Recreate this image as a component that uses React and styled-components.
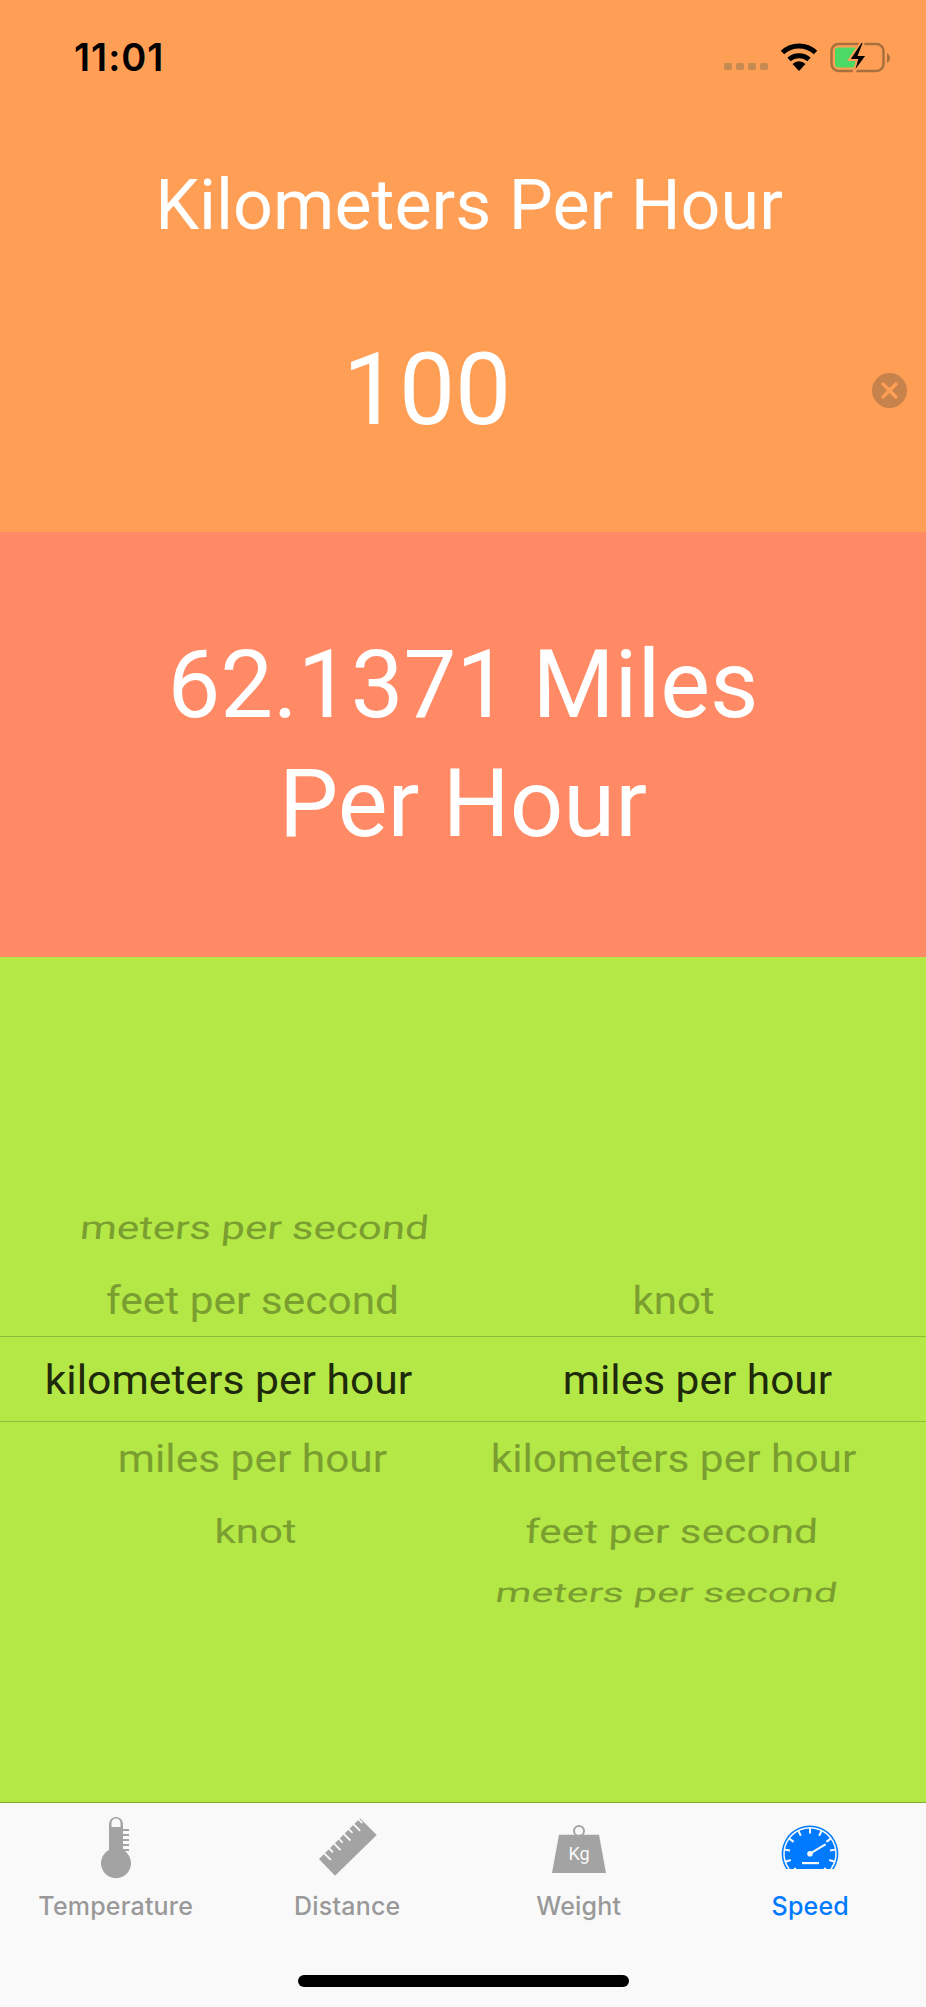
import React from 'react';
import styled, { createGlobalStyle } from 'styled-components';

const GlobalStyle = createGlobalStyle`
  html, body {
    margin: 0;
    padding: 0;
  }
  body {
    font-family: Roboto, "Noto Sans", sans-serif;
  }
`;

const Screen = styled.div`
  width: 926px;
  height: 2007px;
  display: flex;
  flex-direction: column;
  overflow: hidden;
`;

const InputPanel = styled.section`
  height: 532px;
  background-color: #ff9f55;
  display: flex;
  flex-direction: column;
`;

const StatusBar = styled.div`
  height: 112px;
  box-sizing: border-box;
  padding: 38px 36px 0 74px;
  display: flex;
  justify-content: space-between;
  align-items: flex-start;
`;

const Clock = styled.span`
  font-family: Inter, sans-serif;
  font-size: 38px;
  line-height: 38px;
  font-weight: 600;
  color: #000;
  letter-spacing: 1px;
`;

const StatusIcons = styled.div`
  display: flex;
  align-items: flex-start;
  margin-top: 5px;
`;

const SignalDots = styled.div`
  display: flex;
  gap: 4px;
  margin: 20px 12px 0 0;
`;

const SignalDot = styled.i`
  width: 8px;
  height: 7px;
  border-radius: 2px;
  background-color: #c78a52;
`;

const Wifi = styled.svg`
  width: 38px;
  height: 28px;
  margin-right: 12px;
`;

const Battery = styled.svg`
  width: 60px;
  height: 32px;
  margin-top: -1px;
`;

const PanelTitle = styled.h1`
  margin: 0;
  height: 186px;
  padding: 58px 0 0 12px;
  box-sizing: border-box;
  text-align: center;
  font-size: 70px;
  line-height: 70px;
  font-weight: 400;
  color: #fff;
`;

const InputRow = styled.div`
  display: flex;
  align-items: center;
  height: 140px;
  margin-top: 22px;
`;

const InputValue = styled.span`
  flex: 1;
  padding-right: 18px;
  text-align: center;
  font-size: 100px;
  line-height: 120px;
  color: #fff;
`;

const ClearButton = styled.button`
  width: 35px;
  height: 35px;
  margin-right: 19px;
  padding: 0;
  border: 0;
  border-radius: 50%;
  background-color: #c8824b;
  display: flex;
  align-items: center;
  justify-content: center;
  svg {
    width: 19px;
    height: 19px;
  }
`;

const ResultPanel = styled.section`
  height: 425px;
  background-color: #ff8a65;
  display: flex;
  align-items: center;
  justify-content: center;
`;

const ResultText = styled.p`
  margin: 0;
  width: 640px;
  text-align: center;
  font-size: 94px;
  line-height: 119px;
  color: #fff;
`;

const PickerPanel = styled.section`
  height: 845px;
  box-sizing: border-box;
  padding-top: 234px;
  background-color: #b3e846;
`;

const PickerRow = styled.div`
  height: ${(p) => p.$height}px;
  display: grid;
  grid-template-columns: 463px 463px;
  align-items: center;
  box-sizing: border-box;
  padding-top: ${(p) => (p.$selected ? '3px' : '0')};
  border-top: ${(p) => (p.$selected ? '1px solid #8fbb3c' : '0')};
  border-bottom: ${(p) => (p.$selected ? '1px solid #8fbb3c' : '0')};
`;

const PickerItem = styled.span`
  display: block;
  text-align: center;
  white-space: nowrap;
  font-size: 42px;
  line-height: 46px;
  color: ${(p) => (p.$selected ? '#1e2a0a' : '#7a9e2f')};
  transform: translateX(${(p) => p.$shift}px) scale(${(p) => p.$sx}, ${(p) => p.$sy}) skewX(${(p) => p.$skew}deg);
`;

const TabBar = styled.nav`
  height: 205px;
  box-sizing: border-box;
  border-top: 1px solid #7fae2c;
  background-color: #f9f9f9;
  display: flex;
  flex-direction: column;
  padding-top: 12px;
`;

const TabList = styled.div`
  display: grid;
  grid-template-columns: repeat(4, 1fr);
`;

const Tab = styled.div`
  display: flex;
  flex-direction: column;
  align-items: center;
  color: ${(p) => (p.$active ? '#007aff' : '#999999')};
`;

const TabIcon = styled.svg`
  width: 64px;
  height: 64px;
  fill: ${(p) => (p.$active ? '#007aff' : '#a3a3a3')};
`;

const TabLabel = styled.span`
  margin-top: 11px;
  font-family: Inter, sans-serif;
  font-size: 25px;
  line-height: 32px;
  font-weight: 500;
  letter-spacing: 0.2px;
`;

const HomeIndicator = styled.div`
  width: 331px;
  height: 12px;
  margin: 53px auto 0;
  border-radius: 6px;
  background-color: #000;
`;

const rows = [
  { height: 74, left: { text: 'meters per second', shift: 23, sx: 1, sy: 0.78, skew: -4 } },
  {
    height: 71,
    left: { text: 'feet per second', shift: 21, sx: 1.01, sy: 0.92, skew: 0 },
    right: { text: 'knot', shift: -21, sx: 1, sy: 0.92, skew: 0 },
  },
  {
    height: 86,
    selected: true,
    left: { text: 'kilometers per hour', shift: -3, sx: 1.015, sy: 0.96, skew: 0 },
    right: { text: 'miles per hour', shift: 3, sx: 1.01, sy: 0.96, skew: 0 },
  },
  {
    height: 74,
    left: { text: 'miles per hour', shift: 21, sx: 1.01, sy: 0.92, skew: 0 },
    right: { text: 'kilometers per hour', shift: -21, sx: 1.01, sy: 0.92, skew: 0 },
  },
  {
    height: 72,
    left: { text: 'knot', shift: 24, sx: 1, sy: 0.8, skew: 0 },
    right: { text: 'feet per second', shift: -23, sx: 1.01, sy: 0.8, skew: -2 },
  },
  { height: 50, right: { text: 'meters per second', shift: -28, sx: 0.98, sy: 0.64, skew: -6 } },
];

const rulerTicks = [0, 1, 2, 3, 4, 5, 6, 7];

const speedTicks = [-135, -108, -81, -54, -27, 0, 27, 54, 81, 108, 135];

const ThermometerIcon = () => (
  <TabIcon viewBox="0 0 64 64">
    <path
      fillRule="evenodd"
      d="M25 35V9a7 7 0 0 1 14 0v26a15 15 0 1 1-14 0zM27.5 12h9V8a4.5 4.5 0 0 0-9 0z"
    />
    {[14, 19, 24, 29, 34].map((y) => (
      <rect key={y} x="39" y={y} width="6" height="2" />
    ))}
  </TabIcon>
);

const RulerIcon = () => (
  <TabIcon viewBox="0 0 64 64">
    <path d="M45 3.3 61.7 20 20 60.7 4 44z" />
    {rulerTicks.map((i) => {
      const x = 9.5 + i * 4.9;
      const y = 38.6 - i * 4.85;
      const len = i % 2 === 0 ? 9 : 5;
      return (
        <line
          key={i}
          x1={x - 1}
          y1={y - 1}
          x2={x + len * 0.7}
          y2={y + len * 0.7}
          stroke="#f9f9f9"
          strokeWidth="1.8"
        />
      );
    })}
  </TabIcon>
);

const WeightIcon = () => (
  <TabIcon viewBox="0 0 64 64">
    <circle cx="32" cy="16" r="5" fill="none" stroke="#a3a3a3" strokeWidth="2" />
    <path d="M12 19.7h40L59 58H5z" />
    <text x="32" y="45" textAnchor="middle" fontSize="18" fontFamily="Roboto, sans-serif" fill="#f9f9f9">
      Kg
    </text>
  </TabIcon>
);

const SpeedIcon = () => (
  <TabIcon viewBox="0 0 64 64" $active>
    <path d="M8.2 54A28.3 28.3 0 1 1 55.8 54z" />
    <path d="M11 54A26 26 0 1 1 53 54" fill="none" stroke="#f9f9f9" strokeWidth="1.5" />
    {speedTicks.map((a) => (
      <line
        key={a}
        x1="32"
        y1="12.7"
        x2="32"
        y2="18.5"
        stroke="#f9f9f9"
        strokeWidth="2"
        transform={`rotate(${a} 32 38.7)`}
      />
    ))}
    <path d="M32 38.7 47 29.7" stroke="#f9f9f9" strokeWidth="2" strokeLinecap="round" />
    <circle cx="32" cy="38.7" r="2.8" fill="#f9f9f9" />
    <rect x="24" y="47" width="17" height="2.2" fill="#f9f9f9" />
  </TabIcon>
);

const tabs = [
  { label: 'Temperature', Icon: ThermometerIcon },
  { label: 'Distance', Icon: RulerIcon },
  { label: 'Weight', Icon: WeightIcon },
  { label: 'Speed', Icon: SpeedIcon, active: true },
];

const renderItem = (item, selected) =>
  item ? (
    <PickerItem $selected={selected} $shift={item.shift} $sx={item.sx} $sy={item.sy} $skew={item.skew}>
      {item.text}
    </PickerItem>
  ) : (
    <span />
  );

const App = () => (
  <Screen>
    <GlobalStyle />
    <InputPanel>
      <StatusBar>
        <Clock>11:01</Clock>
        <StatusIcons>
          <SignalDots>
            <SignalDot />
            <SignalDot />
            <SignalDot />
            <SignalDot />
          </SignalDots>
          <Wifi viewBox="0 0 38 28">
            <path d="M2.5 9.5a24 24 0 0 1 33 0" fill="none" stroke="#000" strokeWidth="5" />
            <path d="M9 16.5a15 15 0 0 1 20 0" fill="none" stroke="#000" strokeWidth="5" />
            <path d="M19 28 12.5 21a9 9 0 0 1 13 0z" />
          </Wifi>
          <Battery viewBox="0 0 60 32">
            <rect x="1.5" y="2" width="52" height="27" rx="7" fill="none" stroke="#a86f3f" strokeWidth="2.5" />
            <rect x="5" y="5.5" width="22" height="20" rx="3" fill="#4cd964" />
            <path d="M57 11c2 1 3 3 3 5s-1 4-3 5z" fill="#a86f3f" />
            <path d="M31 0 19 18h8l-4 14 14-19h-8l5-13z" fill="#000" stroke="#ff9f55" strokeWidth="2" />
          </Battery>
        </StatusIcons>
      </StatusBar>
      <PanelTitle>Kilometers Per Hour</PanelTitle>
      <InputRow>
        <InputValue>100</InputValue>
        <ClearButton>
          <svg viewBox="0 0 19 19">
            <path d="M3 3 16 16M16 3 3 16" stroke="#ff9f55" strokeWidth="3.4" strokeLinecap="round" />
          </svg>
        </ClearButton>
      </InputRow>
    </InputPanel>
    <ResultPanel>
      <ResultText>62.1371 Miles Per Hour</ResultText>
    </ResultPanel>
    <PickerPanel>
      {rows.map((row, i) => (
        <PickerRow key={i} $height={row.height} $selected={row.selected}>
          {renderItem(row.left, row.selected)}
          {renderItem(row.right, row.selected)}
        </PickerRow>
      ))}
    </PickerPanel>
    <TabBar>
      <TabList>
        {tabs.map(({ label, Icon, active }) => (
          <Tab key={label} $active={active}>
            <Icon />
            <TabLabel>{label}</TabLabel>
          </Tab>
        ))}
      </TabList>
      <HomeIndicator />
    </TabBar>
  </Screen>
);

export default App;
